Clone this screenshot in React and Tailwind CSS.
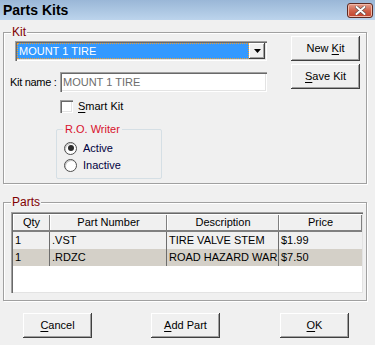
const raised = "bg-[#f0f0f0] shadow-[inset_-1px_-1px_#404040,inset_1px_1px_#ffffff,inset_-2px_-2px_#a0a0a0]";
const sunken = "bg-white shadow-[inset_1px_1px_#a0a0a0,inset_2px_2px_#696969,inset_-1px_-1px_#ffffff,inset_-2px_-2px_#e3e3e3]";

const Btn = ({ pre, u, post, className = "" }) => (
  <button className={`${raised} w-[69px] h-[25px] flex items-center justify-center text-[11px] font-normal text-black ${className}`}>
    <span className="whitespace-pre">
      {pre}
      <span className="underline underline-offset-2">{u}</span>
      {post}
    </span>
  </button>
);

const Group = ({ label, labelColor, className, children }) => (
  <div className={`relative border border-[#a0a0a0] shadow-[inset_1px_1px_#ffffff,1px_1px_#ffffff] ${className}`}>
    <span className={`absolute -top-[8px] left-[7px] px-[1px] bg-[#f0f0f0] leading-[14px] ${labelColor}`}>{label}</span>
    {children}
  </div>
);

const Radio = ({ checked, label }) => (
  <div className="flex items-center h-[17px]">
    <span className="w-[13px] h-[13px] rounded-full border border-[#4d4d4d] bg-white flex items-center justify-center shadow-[inset_1px_1px_#c8c8c8]">
      {checked && <span className="w-[6px] h-[6px] rounded-full bg-[#2b2b2b]" />}
    </span>
    <span className="ml-[6px] text-[11px] text-[#000040]">{label}</span>
  </div>
);

const cols = [
  { name: "Qty", w: "w-[37px]" },
  { name: "Part Number", w: "w-[117px]" },
  { name: "Description", w: "w-[112px]" },
  { name: "Price", w: "flex-1" },
];

const rows = [
  { cells: ["1", ".VST", "TIRE VALVE STEM", "$1.99"], bg: "bg-[#f0f0f0]" },
  { cells: ["1", ".RDZC", "ROAD HAZARD WAR", "$7.50"], bg: "bg-[#d4d0c8]" },
];

export default function App() {
  return (
    <div className="w-[375px] h-[345px] bg-[#f0f0f0] overflow-hidden text-black" style={{ fontFamily: '"Liberation Sans", Arial, sans-serif' }}>
      {/* title bar */}
      <div className="h-[20px] bg-gradient-to-b from-[#9ab7d7] to-[#bcd4ec] flex items-center justify-between pl-[3px] pr-[2px]">
        <span className="text-[14px] font-bold leading-none">Parts Kits</span>
        <span className="w-[26px] h-[15px] mt-[1px] rounded-[3px] border border-[#5e2a22] bg-gradient-to-b from-[#e3a08f] via-[#d0624a] to-[#c0402a] flex items-center justify-center shadow-[inset_0_0_0_1px_#f0b8a8]">
          <svg width="11" height="9" viewBox="0 0 11 9">
            <path d="M1.5 1 L9.5 8 M9.5 1 L1.5 8" stroke="#5a4a48" strokeWidth="3.2" strokeLinecap="round" />
            <path d="M1.5 1 L9.5 8 M9.5 1 L1.5 8" stroke="#ffffff" strokeWidth="2" strokeLinecap="round" />
          </svg>
        </span>
      </div>

      {/* Kit group */}
      <Group label="Kit" labelColor="text-[12px] text-[#800000]" className="ml-[3px] mt-[12px] w-[364px] h-[152px]">
        <div className="flex">
          <div className="w-[287px]">
            <div className={`ml-[11px] mt-[8px] w-[252px] h-[20px] ${sunken} flex items-center p-[2px]`}>
              <div className="flex-1 h-[16px] bg-[#3399ff] border border-dotted border-[#f0a030] flex items-center pl-[1px] text-[11px] text-white">
                MOUNT 1 TIRE
              </div>
              <div className={`${raised} w-[16px] h-[16px] flex items-center justify-center`}>
                <svg width="7" height="4" viewBox="0 0 7 4"><path d="M0 0 H7 L3.5 4 Z" fill="#000" /></svg>
              </div>
            </div>
            <div className="mt-[11px] pl-[6px] flex items-center">
              <span className="w-[50px] text-[11px] tracking-[-0.3px] whitespace-nowrap">Kit name :</span>
              <div className={`w-[207px] h-[20px] ${sunken} flex items-center pl-[3px] text-[11px] text-[#6d6d6d]`}>MOUNT 1 TIRE</div>
            </div>
            <div className="mt-[6px] pl-[56px] flex items-center">
              <span className={`w-[13px] h-[13px] ${sunken}`} />
              <span className="ml-[5px] text-[11px]"><span className="underline underline-offset-2">S</span>mart Kit</span>
            </div>
            <div className="ml-[52px] mt-[14px] w-[106px] h-[50px] relative border border-[#d5dfe5] rounded-[2px]">
              <span className="absolute -top-[8px] left-[6px] px-[2px] bg-[#f0f0f0] text-[11px] leading-[14px] text-[#d8102c]">R.O. Writer</span>
              <div className="pt-[10px] pl-[7px]">
                <Radio checked label="Active" />
                <Radio label="Inactive" />
              </div>
            </div>
          </div>
          <div className="pt-[3px] flex flex-col gap-[3px]">
            <Btn pre="New " u="K" post="it" />
            <Btn u="S" post="ave Kit" className="h-[24px]" />
          </div>
        </div>
      </Group>

      {/* Parts group */}
      <Group label="Parts" labelColor="text-[12px] text-[#800000]" className="ml-[3px] mt-[18px] w-[364px] h-[99px]">
        <div className="ml-[7px] mt-[9px] w-[352px] h-[81px] bg-white p-[2px] pr-[1px] pb-[1px] shadow-[inset_1px_1px_#a0a0a0,inset_2px_2px_#696969,inset_-1px_-1px_#e3e3e3]">
          <div className="flex h-[18px] border-b-2 border-[#808080]">
            {cols.map((c) => (
              <div key={c.name} className={`${c.w} ${raised} shadow-[inset_1px_1px_#ffffff,inset_-1px_0_#808080] flex items-center justify-center text-[11px]`}>
                {c.name}
              </div>
            ))}
          </div>
          {rows.map((r, i) => (
            <div key={i} className={`flex h-[17px] ${r.bg}`}>
              {r.cells.map((v, j) => (
                <div key={j} className={`${cols[j].w} flex items-center pl-[2px] text-[11px] whitespace-nowrap overflow-hidden ${j < 3 ? "border-r border-[#6d6d6d]" : ""}`}>
                  {v}
                </div>
              ))}
            </div>
          ))}
        </div>
      </Group>

      {/* bottom buttons */}
      <div className="flex mt-[12px] ml-[23px]">
        <Btn u="C" post="ancel" />
        <Btn u="A" post="dd Part" className="ml-[59px]" />
        <Btn u="O" post="K" className="ml-[60px]" />
      </div>
    </div>
  );
}
